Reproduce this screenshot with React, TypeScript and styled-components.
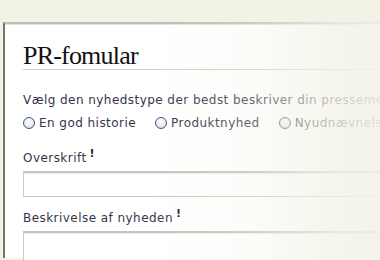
import { styled, createGlobalStyle } from 'styled-components';

const BG = '#f3f2e7';

const GlobalStyle = createGlobalStyle`
  html, body {
    margin: 0;
    padding: 0;
    background: ${BG};
  }
  body {
    width: 380px;
    height: 260px;
    overflow: hidden;
  }
`;

const Page = styled.div`
  position: relative;
  width: 380px;
  height: 260px;
  padding: 22px 0 0 3px;
  box-sizing: border-box;
  overflow: hidden;
`;

const Panel = styled.div`
  width: 520px;
  height: 236px;
  box-sizing: border-box;
  background: #ffffff;
  border-left: 2px solid #75756b;
  border-top: 2px solid #bdbdb5;
  box-shadow: inset 0 1px 0 #e2e2dc;
  padding: 20px 0 0 18px;
  font-family: 'DejaVu Sans', Verdana, sans-serif;
  letter-spacing: 0.45px;
  color: #35354a;
`;

const Title = styled.h1`
  margin: 0;
  font-family: 'Liberation Serif', 'Times New Roman', serif;
  font-weight: normal;
  font-size: 26px;
  line-height: 24px;
  color: #111111;
  letter-spacing: -0.8px;
  padding-bottom: 1px;
  border-bottom: 1px solid #cfcfcb;
  width: 480px;
`;

const Intro = styled.p`
  margin: 23px 0 0;
  font-size: 12px;
  line-height: 15px;
  white-space: nowrap;
`;

const RadioRow = styled.div`
  display: flex;
  align-items: center;
  margin-top: 7px;
  height: 15px;
`;

const RadioOption = styled.label`
  display: flex;
  align-items: center;
  gap: 4px;
  font-size: 12px;
  white-space: nowrap;
  margin-right: 19px;
`;

const RadioCircle = styled.span`
  display: inline-block;
  width: 10px;
  height: 10px;
  border-radius: 50%;
  border: 1px solid #3d5576;
  background: radial-gradient(circle at 50% 35%, #ffffff 0%, #e6e9ee 60%, #c9ced6 100%);
  box-sizing: content-box;
`;

const Field = styled.div<{ $gap: number }>`
  margin-top: ${(p) => p.$gap}px;
`;

const Label = styled.div`
  font-size: 12px;
  line-height: 15px;
  white-space: nowrap;
`;

const Required = styled.sup`
  font-weight: bold;
  font-size: 11px;
  color: #1c1c1c;
  margin-left: 3px;
  vertical-align: 5px;
  line-height: 0;
`;

const Input = styled.div<{ $height: number }>`
  margin-top: 5px;
  width: 480px;
  height: ${(p) => p.$height}px;
  box-sizing: border-box;
  border: 1px solid #c9c9c5;
  border-top: 2px solid #c4c4c0;
  box-shadow: inset 0 1px 0 #ececea;
  background: #ffffff;
`;

const Fade = styled.div`
  position: absolute;
  inset: 0;
  pointer-events: none;
  background: linear-gradient(
    to right,
    rgba(243, 242, 231, 0) 0px,
    rgba(243, 242, 231, 0) 150px,
    rgba(243, 242, 231, 0.25) 250px,
    rgba(243, 242, 231, 0.75) 330px,
    rgba(243, 242, 231, 0.9) 380px
  );
`;

export default function App() {
  return (
    <Page>
      <GlobalStyle />
      <Panel>
        <Title>PR-fomular</Title>
        <Intro>Vælg den nyhedstype der bedst beskriver din pressemeddelelse</Intro>
        <RadioRow>
          <RadioOption>
            <RadioCircle />
            En god historie
          </RadioOption>
          <RadioOption>
            <RadioCircle />
            Produktnyhed
          </RadioOption>
          <RadioOption>
            <RadioCircle />
            Nyudnævnelse
          </RadioOption>
        </RadioRow>
        <Field $gap={21}>
          <Label>
            Overskrift<Required>!</Required>
          </Label>
          <Input $height={26} />
        </Field>
        <Field $gap={14}>
          <Label>
            Beskrivelse af nyheden<Required>!</Required>
          </Label>
          <Input $height={60} />
        </Field>
      </Panel>
      <Fade />
    </Page>
  );
}
